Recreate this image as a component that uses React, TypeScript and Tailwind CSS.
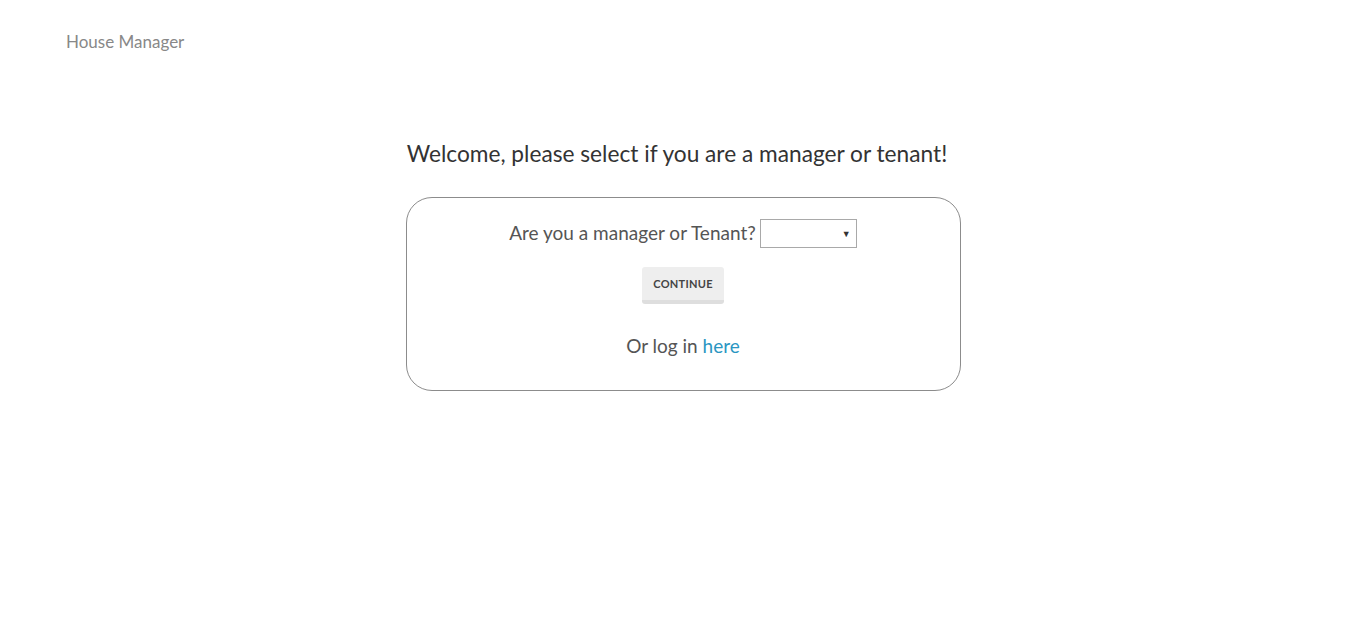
export default function App() {
  return (
    <div className="min-h-[641px] bg-white" style={{ fontFamily: 'Lato, "Open Sans", sans-serif' }}>
      <header className="px-[66px] pt-[29px]">
        <span className="text-[17px] text-[#888]">House Manager</span>
      </header>

      <main className="flex flex-col items-center pt-[82px]">
        <h1 className="text-[22.7px] text-[#333] -ml-[11px]">Welcome, please select if you are a manager or tenant!</h1>

        <div className="mt-[26px] ml-[1px] flex h-[194px] w-[555px] flex-col items-center rounded-[26px] border border-[#8c8c8c] pt-[21px]">
          <div className="flex items-center gap-[4px]">
            <span className="text-[19px] text-[#555]">Are you a manager or Tenant?</span>
            <div className="relative h-[29px] w-[97px] border border-[#a9a9a9] bg-white">
              <span className="absolute right-[5px] top-[7px] text-[9px] text-[#333]">▼</span>
            </div>
          </div>

          <button className="mt-[19px] h-[37px] w-[82px] rounded-[3px] border-b-[4px] border-[#dedede] bg-[#eeeeee] pt-[3px] text-[11px] font-bold tracking-wide text-[#444]">
            CONTINUE
          </button>

          <p className="mt-[28px] text-[19px] text-[#555]">
            Or log in <a className="text-[#2a96c2]" href="#">here</a>
          </p>
        </div>
      </main>
    </div>
  );
}
